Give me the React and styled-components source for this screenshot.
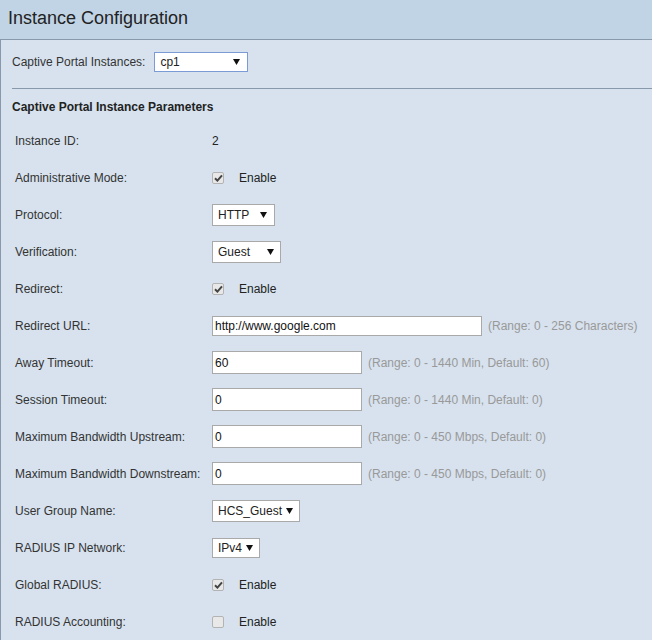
import React from "react";
import styled, { createGlobalStyle } from "styled-components";

const GlobalStyle = createGlobalStyle`
  html, body { margin: 0; padding: 0; }
  body {
    background: #d7e2ee;
    font-family: "Liberation Sans", Arial, sans-serif;
    font-size: 12px;
    color: #333;
  }
`;

const Page = styled.div`
  min-height: 640px;
  background: #d7e2ee;
`;

const Header = styled.h1`
  margin: 0;
  height: 39px;
  line-height: 37px;
  padding-left: 8px;
  background: #c0d4e5;
  border-bottom: 1px solid #8799aa;
  font-size: 18px;
  font-weight: normal;
  color: #222;
`;

const Content = styled.div`
  border-left: 1px solid #8799aa;
  min-height: 600px;
`;

const InstanceBar = styled.div`
  display: flex;
  align-items: center;
  gap: 9px;
  padding: 12px 0 0 11px;
  color: #333;
`;

const Divider = styled.div`
  margin: 16px 0 0 11px;
  height: 1px;
  background: #8799aa;
`;

const SectionTitle = styled.div`
  margin: 11px 0 7px 11px;
  line-height: 15px;
  font-weight: bold;
  color: #222;
`;

const Row = styled.div`
  display: flex;
  align-items: center;
  height: 37px;
  padding-left: 14px;
`;

const Label = styled.div`
  width: 197px;
  flex: none;
  color: #333;
`;

const Value = styled.div`
  display: flex;
  align-items: center;
  color: #222;
`;

const SelectBox = styled.div`
  box-sizing: border-box;
  display: flex;
  align-items: center;
  justify-content: space-between;
  width: ${(p) => p.$w}px;
  height: ${(p) => p.$h || 22}px;
  padding: 0 ${(p) => p.$pr || 7}px 0 5px;
  background: #fff;
  border: 1px solid ${(p) => (p.$focus ? "#7a9bd6" : "#a9a9a9")};
  color: #222;
  font-size: 12px;
`;

const Arrow = styled.svg`
  width: 7px;
  height: 6px;
  flex: none;
`;

const TextInput = styled.div`
  box-sizing: border-box;
  display: flex;
  align-items: center;
  width: ${(p) => p.$w}px;
  height: ${(p) => p.$h}px;
  padding-left: 2px;
  background: #fff;
  border: 1px solid #a9a9a9;
  color: #111;
  font-size: 12px;
`;

const Hint = styled.span`
  margin-left: 6px;
  color: #999;
`;

const Check = styled.span`
  box-sizing: border-box;
  display: inline-flex;
  align-items: center;
  justify-content: center;
  width: 12px;
  height: 12px;
  border: 1px solid #b3b3b3;
  border-radius: 2px;
  background: #e8e8e8;
  flex: none;
`;

const CheckLabel = styled.span`
  margin-left: 15px;
  color: #222;
`;

const Select = ({ value, w, h, pr, focus }) => (
  <SelectBox $w={w} $h={h} $pr={pr} $focus={focus}>
    <span>{value}</span>
    <Arrow viewBox="0 0 7 6">
      <path d="M0 0 L7 0 L3.5 6 Z" fill="#111" />
    </Arrow>
  </SelectBox>
);

const Checkbox = ({ checked }) => (
  <Value>
    <Check>
      {checked && (
        <svg width="9" height="8" viewBox="0 0 9 8">
          <path d="M1 4.2 L3.4 6.6 L8 1.4" fill="none" stroke="#444" strokeWidth="2" />
        </svg>
      )}
    </Check>
    <CheckLabel>Enable</CheckLabel>
  </Value>
);

const Input = ({ value, w = 150, h = 23, hint }) => (
  <Value>
    <TextInput $w={w} $h={h}>{value}</TextInput>
    <Hint>{hint}</Hint>
  </Value>
);

export default function App() {
  return (
    <Page>
      <GlobalStyle />
      <Header>Instance Configuration</Header>
      <Content>
        <InstanceBar>
          <span>Captive Portal Instances:</span>
          <Select value="cp1" w={94} h={20} pr={7} focus />
        </InstanceBar>
        <Divider />
        <SectionTitle>Captive Portal Instance Parameters</SectionTitle>

        <Row>
          <Label>Instance ID:</Label>
          <Value>2</Value>
        </Row>
        <Row>
          <Label>Administrative Mode:</Label>
          <Checkbox checked />
        </Row>
        <Row>
          <Label>Protocol:</Label>
          <Select value="HTTP" w={63} h={22} />
        </Row>
        <Row>
          <Label>Verification:</Label>
          <Select value="Guest" w={69} h={22} pr={6} />
        </Row>
        <Row>
          <Label>Redirect:</Label>
          <Checkbox checked />
        </Row>
        <Row>
          <Label>Redirect URL:</Label>
          <Input value="http://www.google.com" w={270} h={20} hint="(Range: 0 - 256 Characters)" />
        </Row>
        <Row>
          <Label>Away Timeout:</Label>
          <Input value="60" hint="(Range: 0 - 1440 Min, Default: 60)" />
        </Row>
        <Row>
          <Label>Session Timeout:</Label>
          <Input value="0" hint="(Range: 0 - 1440 Min, Default: 0)" />
        </Row>
        <Row>
          <Label>Maximum Bandwidth Upstream:</Label>
          <Input value="0" hint="(Range: 0 - 450 Mbps, Default: 0)" />
        </Row>
        <Row>
          <Label>Maximum Bandwidth Downstream:</Label>
          <Input value="0" hint="(Range: 0 - 450 Mbps, Default: 0)" />
        </Row>
        <Row>
          <Label>User Group Name:</Label>
          <Select value="HCS_Guest" w={88} h={22} pr={6} />
        </Row>
        <Row>
          <Label>RADIUS IP Network:</Label>
          <Select value="IPv4" w={48} h={20} pr={6} />
        </Row>
        <Row>
          <Label>Global RADIUS:</Label>
          <Checkbox checked />
        </Row>
        <Row>
          <Label>RADIUS Accounting:</Label>
          <Checkbox />
        </Row>
      </Content>
    </Page>
  );
}
